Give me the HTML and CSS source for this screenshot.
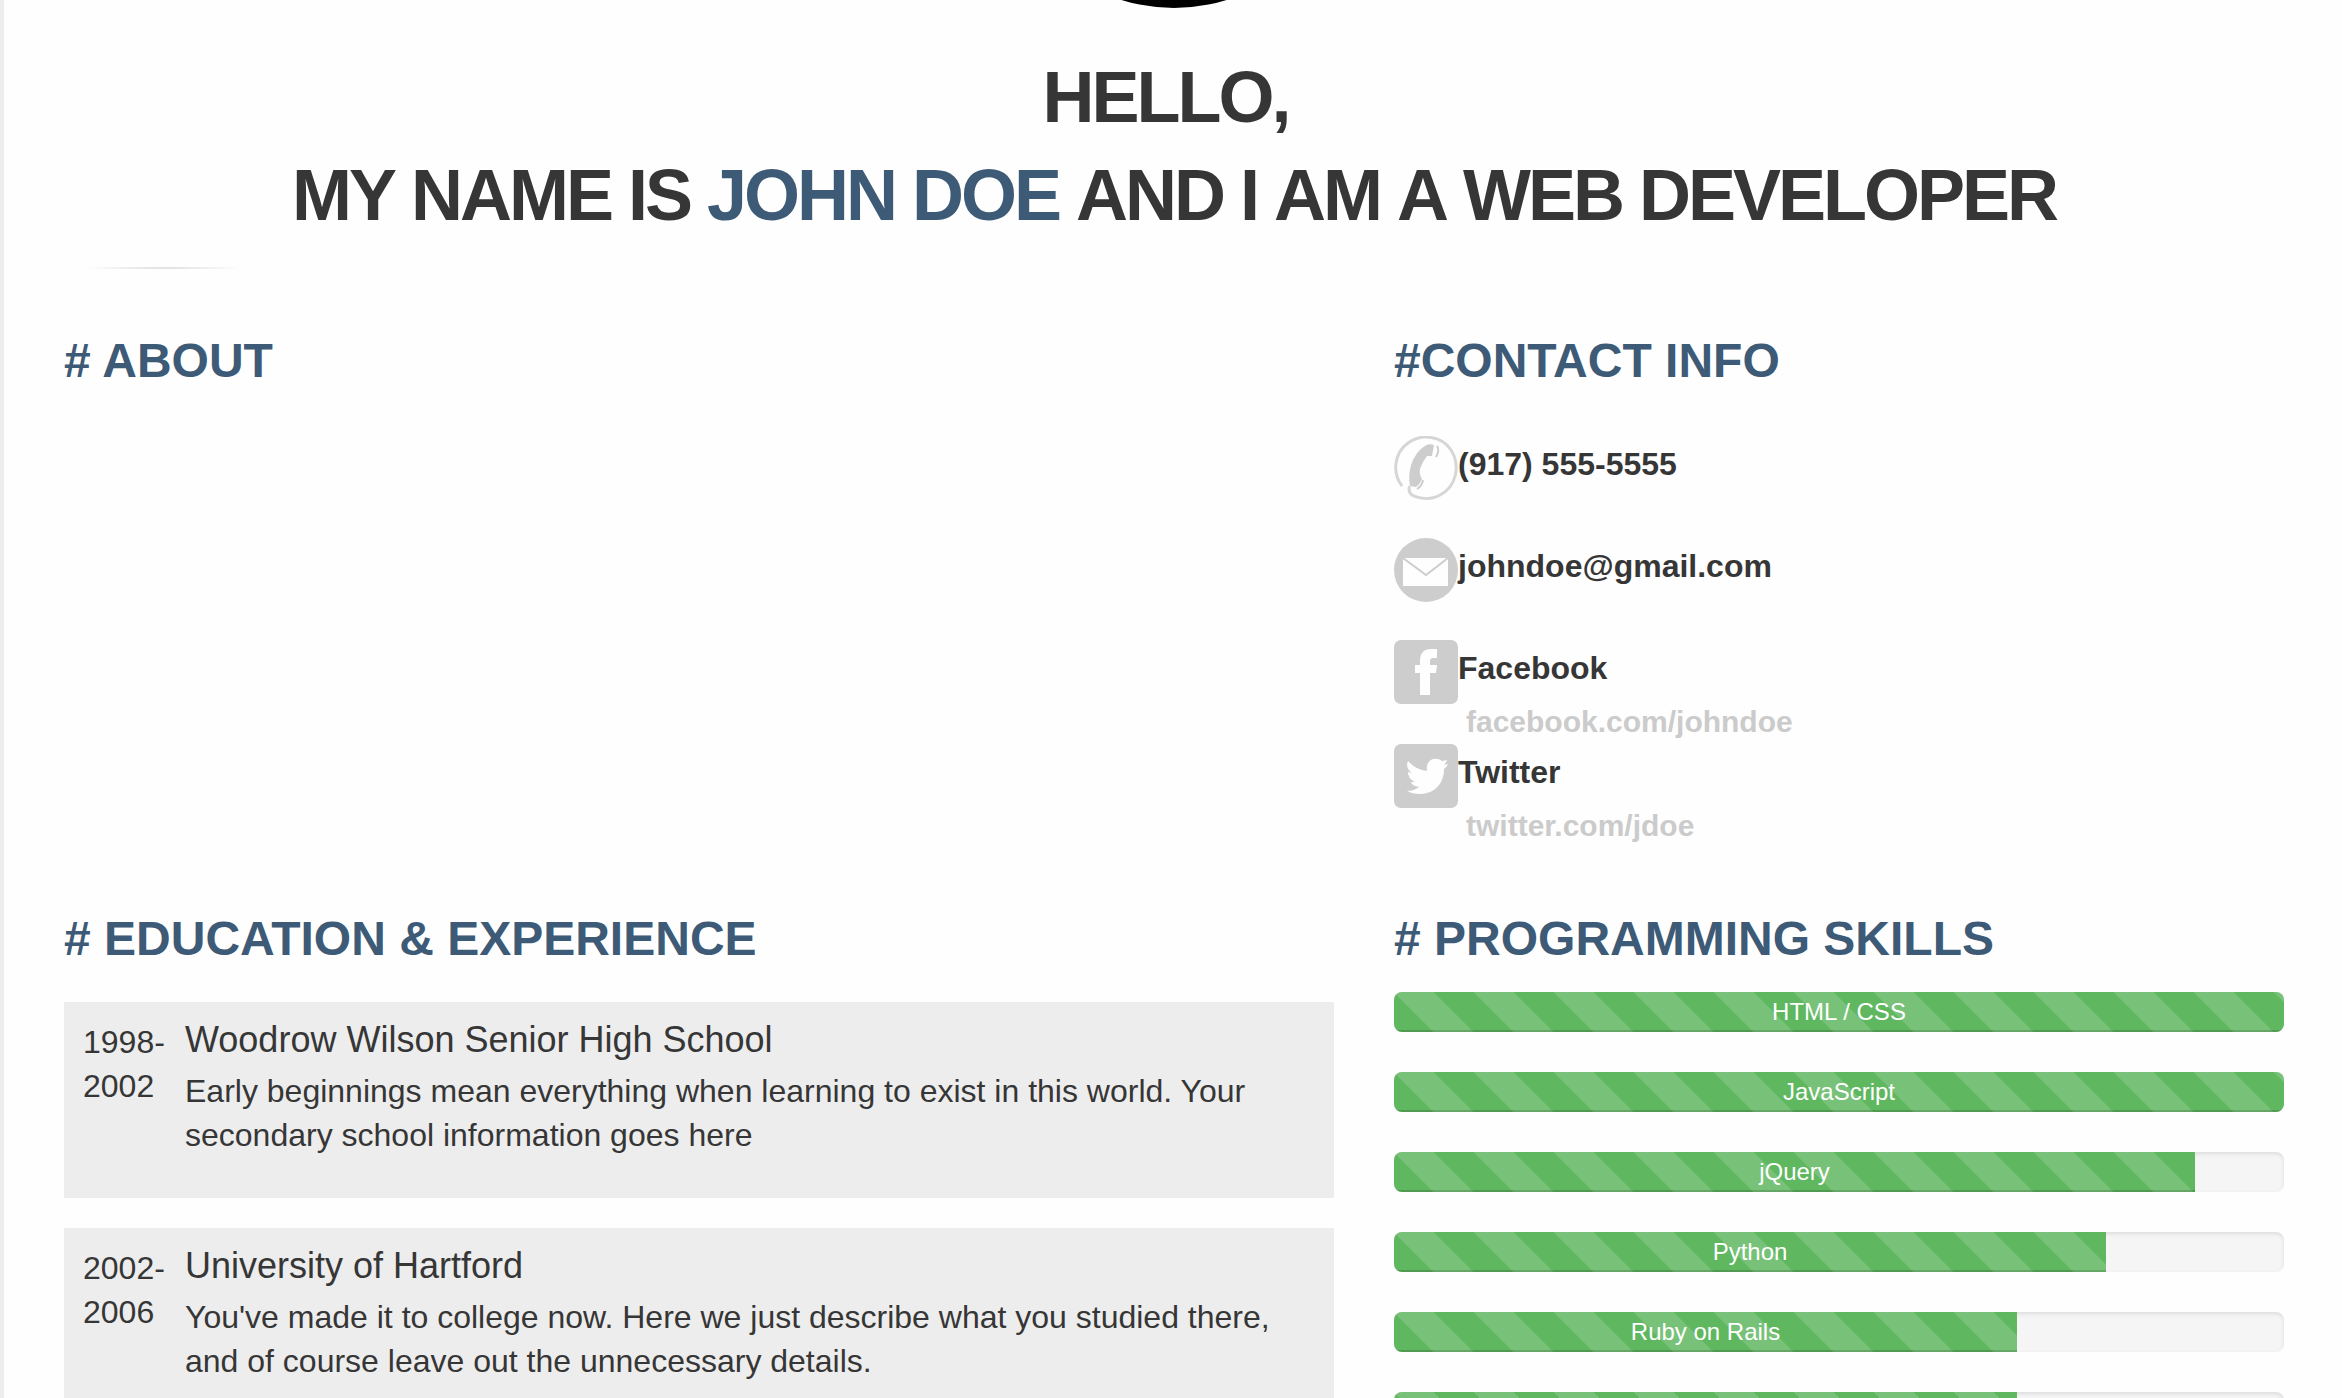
FILE: index.html
```html
<!DOCTYPE html>
<html lang="en">
<head>
<meta charset="utf-8">
<title>John Doe - Web Developer</title>
<meta name="viewport" content="width=device-width, initial-scale=1">
<link rel="stylesheet" href="styles.css">
</head>
<body>
<div class="page">
  <header class="intro">
    <div class="avatar"></div>
    <h1 class="greeting">Hello,&nbsp;<br>My name is <span class="name">John Doe</span> and I am a web developer</h1>
    <hr class="divider">
  </header>

  <main class="sections">
    <section>
      <h2 class="heading"># About</h2>
    </section>

    <section>
      <h2 class="heading">#Contact Info</h2>
      <ul class="contacts">
        <li class="contact">
          <svg class="icon" viewBox="0 0 64 64" aria-hidden="true">
            <path fill="none" stroke="#d6d6d6" stroke-width="3" d="M8 50C-2 37 0 17 14 7C28-3 48 0 57 14C67 30 62 51 46 59C38 64 25 63 18 59Q14 56 15.500 50"/>
            <path fill="#cdcdcd" d="M31 10Q34 7 40 9L38 20L33 20Q28 26 26 33Q25 38 28 43Q26 48 22 51L16 50Q14 41 17 29Q22 15 31 10Z"/>
            <path fill="none" stroke="#cdcdcd" stroke-width="2" d="M43 10Q46 15 42 21M29 44Q28 50 23 53"/>
          </svg>
          <span class="label">(917) 555-5555</span>
        </li>
        <li class="contact">
          <svg class="icon" viewBox="0 0 64 64" aria-hidden="true">
            <circle cx="32" cy="32" r="32" fill="#cdcdcd"/>
            <path fill="#fefefe" d="M9 20H54V48H9Z"/>
            <path fill="none" stroke="#cdcdcd" stroke-width="2" d="M9 20L32 37L54 20"/>
          </svg>
          <span class="label">johndoe@gmail.com</span>
        </li>
        <li class="contact social">
          <svg class="icon" viewBox="0 0 64 64" aria-hidden="true">
            <rect width="64" height="64" rx="7" fill="#cdcdcd"/>
            <path fill="#fefefe" d="M26 55V33H21V25H26V21Q26 9 37 9H43V18H39Q36 18 36 21V25H43L42 33H36V55Z"/>
          </svg>
          <div>
            <span class="label">Facebook</span>
            <a class="link" href="https://facebook.com/johndoe">facebook.com/johndoe</a>
          </div>
        </li>
        <li class="contact social">
          <svg class="icon" viewBox="0 0 64 64" aria-hidden="true">
            <rect width="64" height="64" rx="7" fill="#cdcdcd"/>
            <path fill="#fefefe" d="M54 20Q53 23 50 25C50 41 39 50 26 50Q18 50 13 47Q20 47 25 43Q18 42 17 38H21Q14 35 14 28L18 29Q11 24 14 17Q22 26 33 27C31 15 42 12 48 17L53 16Q52 19 50 21Z"/>
          </svg>
          <div>
            <span class="label">Twitter</span>
            <a class="link" href="https://twitter.com/jdoe">twitter.com/jdoe</a>
          </div>
        </li>
      </ul>
    </section>

    <section>
      <h2 class="heading"># Education &amp; Experience</h2>
      <div class="timeline">
        <article class="entry">
          <div class="years">1998- 2002</div>
          <div>
            <h3 class="title">Woodrow Wilson Senior High School</h3>
            <p class="text">Early beginnings mean everything when learning to exist in this world. Your secondary school information goes here</p>
          </div>
        </article>
        <article class="entry">
          <div class="years">2002- 2006</div>
          <div>
            <h3 class="title">University of Hartford</h3>
            <p class="text">You've made it to college now. Here we just describe what you studied there, and of course leave out the unnecessary details.</p>
          </div>
        </article>
      </div>
    </section>

    <section>
      <h2 class="heading"># Programming Skills</h2>
      <ul class="skills">
        <li class="track"><div class="bar" style="width: 100%">HTML / CSS</div></li>
        <li class="track"><div class="bar" style="width: 100%">JavaScript</div></li>
        <li class="track"><div class="bar" style="width: 90%">jQuery</div></li>
        <li class="track"><div class="bar" style="width: 80%">Python</div></li>
        <li class="track"><div class="bar" style="width: 70%">Ruby on Rails</div></li>
        <li class="track"><div class="bar" style="width: 70%"></div></li>
      </ul>
    </section>
  </main>
</div>
</body>
</html>
```
FILE: styles.css
```css
* {
  box-sizing: border-box;
}

body {
  margin: 0;
  height: 100vh;
  overflow: hidden;
  background: #fefefe;
  color: #363636;
  font-family: "Liberation Sans", Arial, sans-serif;
  font-size: 32px;
  line-height: 44px;
}

h1, h2, h3, p, ul {
  margin: 0;
  padding: 0;
}

ul {
  list-style: none;
}

.page {
  padding: 0 58px 0 60px;
  border-left: 4px solid #ededed;
}

/* The portrait is mostly above the fold of the page */
.intro {
  display: flex;
  flex-direction: column;
  margin-top: -346px;
}

.avatar {
  align-self: center;
  width: 354px;
  height: 354px;
  border-radius: 50%;
  background: #000;
}

.greeting {
  margin-top: 40px;
  font-size: 72px;
  line-height: 98px;
  font-kerning: none;
  letter-spacing: -3px;
  text-align: center;
  text-transform: uppercase;
}

.name {
  color: #3d5a77;
}

.divider {
  width: 200px;
  height: 4px;
  margin: 22px 0 64px;
  border: 0;
  background: radial-gradient(closest-side, #d8d8d8, #fefefe 80%);
}

.sections {
  display: grid;
  grid-template-columns: minmax(0, 127fr) minmax(0, 89fr);
  gap: 64px 60px;
}

.heading {
  margin-bottom: 26px;
  color: #3d5a77;
  font-size: 48px;
  line-height: 54px;
  text-transform: uppercase;
}

.contacts {
  padding-top: 22px;
}

.contact {
  display: flex;
  align-items: flex-start;
  margin-bottom: 38px;
  font-weight: bold;
}

.social {
  margin-bottom: 0;
}

.icon {
  flex: none;
  width: 64px;
  height: 64px;
}

.label {
  display: block;
  line-height: 56px;
}

.link {
  display: block;
  margin-top: 4px;
  padding-left: 8px;
  color: #cbcbcb;
  font-size: 30px;
  line-height: 44px;
  text-decoration: none;
}

.timeline {
  display: grid;
  gap: 30px;
  padding-top: 10px;
}

.entry {
  display: grid;
  grid-template-columns: 82px minmax(0, 1fr);
  gap: 20px;
  padding: 18px 19px 41px;
  background: #ededed;
}

.title {
  margin-bottom: 9px;
  font-size: 36px;
  font-weight: normal;
  line-height: 40px;
}

.skills {
  display: grid;
  gap: 40px;
}

.track {
  height: 40px;
  overflow: hidden;
  border-radius: 8px;
  background: #f5f5f5;
  box-shadow: inset 0 2px 4px rgba(0, 0, 0, 0.1);
}

.bar {
  height: 100%;
  background-color: #5fb760;
  background-image: linear-gradient(45deg, rgba(255, 255, 255, 0.15) 25%, transparent 25%, transparent 50%, rgba(255, 255, 255, 0.15) 50%, rgba(255, 255, 255, 0.15) 75%, transparent 75%);
  background-size: 80px 80px;
  box-shadow: inset 0 -2px 0 rgba(0, 0, 0, 0.15);
  color: #fff;
  font-size: 24px;
  line-height: 40px;
  text-align: center;
}
```
